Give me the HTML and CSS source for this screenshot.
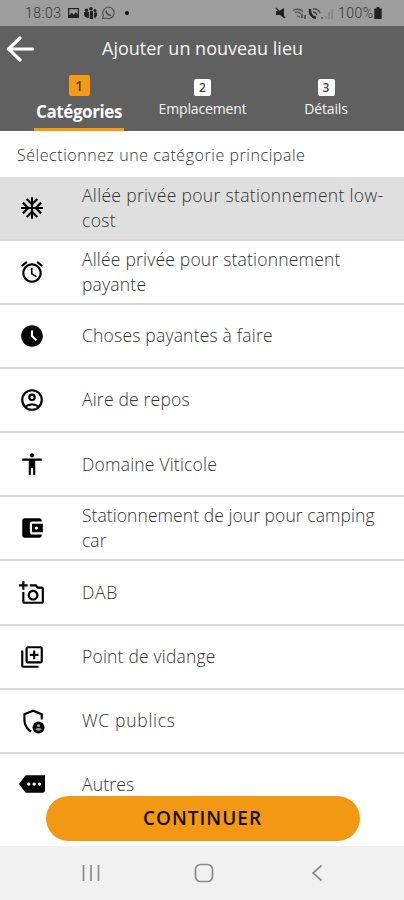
FILE: index.html
```
<!DOCTYPE html>
<html lang="fr">
<head>
<meta charset="utf-8">
<title>Ajouter un nouveau lieu</title>
<link rel="stylesheet" href="styles.css">
</head>
<body>
<div class="phone">
  <div class="status">
    <span class="clock">18:03</span>
    <svg class="s-left" width="64" height="14" viewBox="0 0 64 14">
      <path fill="#222" fill-rule="evenodd" d="M1 2h11v10H1zM2.300 3.300v6l2.500-2.500 2 2 2-2.800 2 2.500V3.300z"/>
      <g fill="#222"><circle cx="19.500" cy="4.200" r="1.800"/><circle cx="24" cy="2.700" r="1.800"/><circle cx="28" cy="4.500" r="1.500"/><path d="M17 6h5v6q-4 0-5-3zM23 5h3v8h-3zM27 6.500h3v3q-1 2.500-3 2.500z"/></g>
      <g fill="none" stroke="#555" stroke-width="1.200"><path d="M35.500 12.500l.9-3A5.700 5.700 0 1 1 39 12z"/><path stroke="#444" stroke-width="1.500" d="M39 4.500q0 4 5 5"/></g>
      <circle cx="60" cy="7" r="2" fill="#111"/>
    </svg>
    <svg class="s-right" width="60" height="14" viewBox="0 0 60 14">
      <path fill="#222" d="M1 5h3l5-3v10L5 9H1z"/><path stroke="#222" stroke-width="1.300" d="M1 2l9 10"/>
      <g fill="none" stroke="#555" stroke-width="1.300"><path d="M18 4.500q5-3 10 1M20 7q3-2 6 1M22 9.500l3 2"/><path stroke="#333" d="M27 8v4M30 9v4"/></g>
      <path d="M35 3q-1 7 6 9" fill="none" stroke="#222" stroke-width="2.600"/><path d="M38 3q5-1 7 4M38 6q3 0 4 3M47 11v2" fill="none" stroke="#444" stroke-width="1.300"/>
      <path d="M51 10v3M54 6v7M57 3v10" stroke="#858585" stroke-width="1.600"/>
    </svg>
    <span class="pct">100%</span>
    <svg class="bat" width="8" height="12" viewBox="0 0 8 13"><path fill="#222" d="M2.500 0h3v1.500H8V13H0V1.500h2.500z"/></svg>
  </div>
  <header class="head">
    <div class="bar">
      <svg class="back" width="28" height="28" viewBox="0 0 28 28"><path d="M26.500 14H3M14 3L2.500 14 14 25" fill="none" stroke="#fff" stroke-width="3.200" stroke-linecap="round" stroke-linejoin="round"/></svg>
      <h1>Ajouter un nouveau lieu</h1>
    </div>
    <nav class="tabs">
      <div class="tab active"><b class="num">1</b><span>Catégories</span></div>
      <div class="tab"><b class="num">2</b><span>Emplacement</span></div>
      <div class="tab"><b class="num">3</b><span>Détails</span></div>
    </nav>
  </header>
  <p class="hint">Sélectionnez une catégorie principale</p>
  <main class="list">
    <div class="row selected"><svg class="ic" viewBox="0 0 24 24"><path d="M22 11h-4.170l3.240-3.240-1.410-1.420L15 11h-2V9l4.660-4.660-1.420-1.410L13 6.170V2h-2v4.170L7.760 2.930 6.340 4.340 11 9v2H9L4.340 6.340 2.930 7.760 6.170 11H2v2h4.170l-3.240 3.240 1.410 1.420L9 13h2v2l-4.660 4.660 1.420 1.410L11 17.830V22h2v-4.170l3.240 3.240 1.420-1.410L13 15v-2h2l4.660 4.660 1.410-1.420L17.830 13H22z"/></svg><span class="label wide">Allée privée pour stationnement low-<br>cost</span></div>
    <div class="row"><svg class="ic" viewBox="0 0 24 24"><path d="M22 5.720l-4.600-3.860-1.290 1.530 4.600 3.860L22 5.720zM7.880 3.390L6.600 1.860 2 5.710l1.290 1.530 4.590-3.850zM12.500 8H11v6l4.750 2.850.75-1.230-4-2.370V8zM12 4c-4.970 0-9 4.030-9 9s4.020 9 9 9c4.970 0 9-4.030 9-9s-4.030-9-9-9zm0 16c-3.870 0-7-3.130-7-7s3.130-7 7-7 7 3.130 7 7-3.130 7-7 7z"/></svg><span class="label">Allée privée pour stationnement<br>payante</span></div>
    <div class="row"><svg class="ic" viewBox="0 0 24 24"><path d="M11.990 2C6.470 2 2 6.480 2 12s4.470 10 9.990 10C17.520 22 22 17.520 22 12S17.520 2 11.990 2zm3.300 14.710L11 12.410V7h2v4.590l3.710 3.710-1.420 1.410z"/></svg><span class="label">Choses payantes à faire</span></div>
    <div class="row"><svg class="ic" viewBox="0 0 24 24"><g fill="none" stroke="#000" stroke-width="2"><circle cx="12" cy="12" r="9"/><circle cx="12" cy="9.500" r="2.500"/><path d="M5.800 18.200Q8.500 16 12 16t6.200 2.200"/></g></svg><span class="label">Aire de repos</span></div>
    <div class="row"><svg class="ic" viewBox="0 0 24 24"><path d="M12 2c1.100 0 2 .9 2 2s-.9 2-2 2-2-.9-2-2 .9-2 2-2zm9 7h-6v13h-2v-6h-2v6H9V9H3V7h18v2z"/></svg><span class="label">Domaine Viticole</span></div>
    <div class="row"><svg class="ic" viewBox="0 0 24 24"><path d="M21 18v1c0 1.100-.9 2-2 2H5c-1.110 0-2-.9-2-2V5c0-1.100.89-2 2-2h14c1.100 0 2 .9 2 2v1h-9c-1.110 0-2 .9-2 2v8c0 1.100.89 2 2 2h9zm-9-2h10V8H12v8zm4-2.500c-.83 0-1.500-.67-1.500-1.500s.67-1.500 1.500-1.500 1.500.67 1.500 1.500-.67 1.500-1.500 1.500z"/></svg><span class="label tight">Stationnement de jour pour camping<br>car</span></div>
    <div class="row"><svg class="ic" viewBox="0 0 24 24"><path d="M21 6h-3.170L16 4h-6v2h5.120l1.830 2H21v12H5v-9H3v9c0 1.100.9 2 2 2h16c1.100 0 2-.9 2-2V8c0-1.100-.9-2-2-2zM8 14c0 2.760 2.240 5 5 5s5-2.240 5-5-2.240-5-5-5-5 2.240-5 5zm5-3c1.650 0 3 1.350 3 3s-1.350 3-3 3-3-1.350-3-3 1.350-3 3-3zM5 6h3V4H5V1H3v3H0v2h3v3h2V6z"/></svg><span class="label caps">DAB</span></div>
    <div class="row"><svg class="ic" viewBox="0 0 24 24"><path d="M4 6H2v14c0 1.100.9 2 2 2h14v-2H4V6zm16-4H8c-1.100 0-2 .9-2 2v12c0 1.100.9 2 2 2h12c1.100 0 2-.9 2-2V4c0-1.100-.9-2-2-2zm0 14H8V4h12v12zm-7-2h2v-3h3V9h-3V6h-2v3h-3v2h3z"/></svg><span class="label">Point de vidange</span></div>
    <div class="row"><svg class="ic" viewBox="0 0 24 24"><path fill="none" stroke="#000" stroke-width="2" d="M21 10.500V5.800l-8-3.300-8 3.300v5.500c0 4.200 2.700 8.700 6.300 10.500"/><circle cx="18" cy="18" r="5.500"/><g fill="#999"><circle cx="18" cy="16.300" r="1.500"/><path d="M15 19.500q3-2 6 0-3 3-6 0z"/></g></svg><span class="label caps">WC publics</span></div>
    <div class="row last"><svg class="ic" viewBox="0 0 24 24"><path d="M24 4H7c-.7 0-1.200.3-1.600.9L0 12l5.400 7.100c.4.500 1 .9 1.600.9h15c1.100 0 2-.9 2-2zM9 13.500c-.83 0-1.500-.67-1.500-1.500s.67-1.500 1.500-1.500 1.500.67 1.500 1.500-.67 1.500-1.500 1.500zm5 0c-.83 0-1.500-.67-1.500-1.500s.67-1.500 1.500-1.500 1.500.67 1.500 1.500-.67 1.500-1.500 1.500zm5 0c-.83 0-1.500-.67-1.500-1.500s.67-1.500 1.500-1.500 1.500.67 1.500 1.500-.67 1.500-1.500 1.500z"/></svg><span class="label">Autres</span></div>
  </main>
  <div class="action"><button class="cta">CONTINUER</button></div>
  <footer class="nav">
    <svg width="18" height="18" viewBox="0 0 18 18"><path d="M1.500 1v16M9 1v16M16.500 1v16" stroke="#8a8a8a" stroke-width="1.700"/></svg>
    <svg class="home" width="20" height="20" viewBox="0 0 20 20"><rect x="1.500" y="1.500" width="17" height="17" rx="5" fill="none" stroke="#8a8a8a" stroke-width="1.700"/></svg>
    <svg width="12" height="18" viewBox="0 0 12 18"><path d="M10.500 1.500L2 9l8.500 7.500" fill="none" stroke="#8a8a8a" stroke-width="1.700"/></svg>
  </footer>
</div>
</body>
</html>
```
FILE: styles.css
```
* { box-sizing: border-box; }
body { margin: 0; font-family: "Open Sans", "Noto Sans", sans-serif; color: #333; background: #fff; }
.phone { width: 404px; height: 900px; overflow: hidden; display: flex; flex-direction: column; }
.status { height: 26px; flex: none; background: #9d9d9d; display: flex; align-items: center; padding: 0 22px 0 25px; font-family: Roboto, sans-serif; font-size: 14px; font-weight: 300; color: #333; }
.clock { width: 36px; letter-spacing: .5px; }
.s-left { margin-left: 6px; }
.s-right { margin-left: auto; }
.pct { margin-left: 3px; width: 36px; letter-spacing: .5px; }
.bat { flex: none; }
.head { height: 105px; flex: none; background: #606060; color: #f5f5f5; display: flex; flex-direction: column; }
.bar { height: 45px; display: flex; align-items: center; padding-left: 6px; }
.back { flex: none; }
h1 { margin: -2px 0 0 68px; font-size: 18px; line-height: 24px; font-weight: 500; white-space: nowrap; }
.tabs { flex: 1; display: grid; grid-template-columns: 90px 90px 90px; column-gap: 33.500px; padding-left: 34px; }
.tab { display: flex; flex-direction: column; align-items: center; padding-top: 8px; font-size: 14px; font-weight: 500; line-height: 20px; letter-spacing: -.15px; white-space: nowrap; }
.num { width: 17px; height: 17px; border-radius: 2px; background: #fff; color: #444; font-size: 12px; line-height: 17px; text-align: center; font-weight: 600; margin-bottom: 3px; letter-spacing: 0; }
.tab.active { padding-top: 4px; border-bottom: 3px solid #f59a13; font-size: 17px; font-weight: 700; line-height: 27px; letter-spacing: -.4px; color: #fff; }
.active .num { width: 21px; height: 21px; line-height: 21px; background: #f59a13; font-size: 14px; margin-bottom: 2px; }
.hint { height: 46px; flex: none; margin: 0; padding: 0 0 0 17px; font-size: 16px; line-height: 48px; font-weight: 350; letter-spacing: .550px; white-space: nowrap; }
.list { flex: 1; min-height: 0; overflow: hidden; }
.row { height: 64.200px; display: flex; align-items: center; padding-left: 19px; border-bottom: 2px solid #d9d9d9; }
.row.selected { height: 63.500px; background: #dfdfdf; }
.row.last { border: 0; height: 60px; }
.ic { width: 26px; height: 26px; flex: none; fill: #000; }
.label { margin-left: 37px; font-size: 17.500px; line-height: 25px; font-weight: 330; letter-spacing: .2px; white-space: nowrap; }
.label.wide { letter-spacing: .33px; }
.label.tight { letter-spacing: .06px; }
.label.caps { letter-spacing: .7px; }
.action { height: 50px; flex: none; padding: 0 45.500px; }
.cta { display: block; width: 314px; height: 44.500px; border: 0; border-radius: 23px; background: #f39813; color: #171000; font: 600 19px/44px "Open Sans", sans-serif; letter-spacing: 1px; padding: 0; text-align: center; }
.nav { height: 54px; flex: none; background: #f1f1f1; display: flex; align-items: center; justify-content: space-between; padding: 0 81px 0 82px; }
.home { margin-right: 4px; }
```
